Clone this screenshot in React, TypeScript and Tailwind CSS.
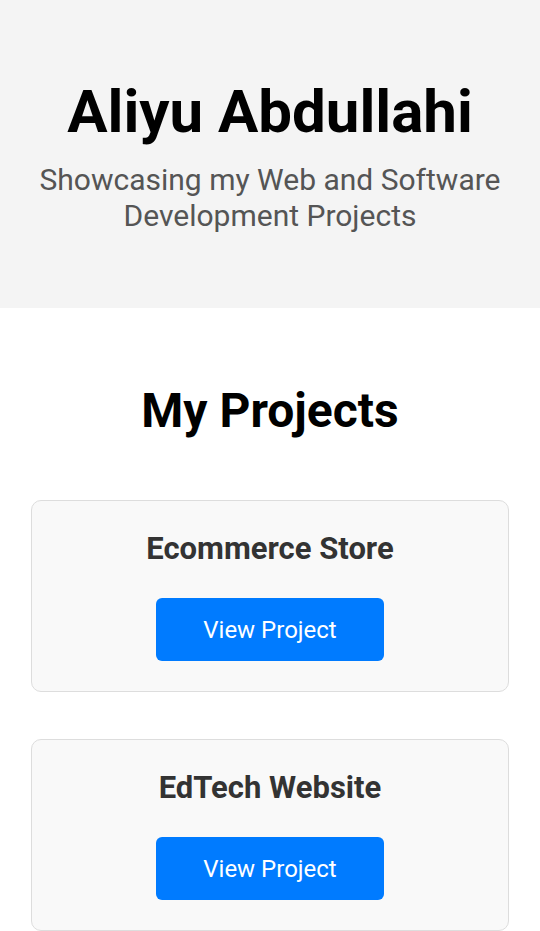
export default function App() {
  const projects = ["Ecommerce Store", "EdTech Website"];
  return (
    <div className="min-h-screen bg-white font-['Roboto',sans-serif]">
      <header className="bg-[#f4f4f4] pt-[75px] pb-[74px] text-center">
        <h1 className="text-[60px] leading-[74px] font-bold text-black">Aliyu Abdullahi</h1>
        <p className="mt-[13px] px-[20px] text-[30px] leading-[36px] text-[#555]">
          Showcasing my Web and Software Development Projects
        </p>
      </header>
      <section className="px-[31px] pt-[73px]">
        <h2 className="text-center text-[48px] leading-[60px] font-bold text-black">My Projects</h2>
        <div className="mt-[59px] flex flex-col gap-[47px]">
          {projects.map((p) => (
            <div
              key={p}
              className="rounded-[10px] border border-[#ddd] bg-[#f9f9f9] pt-[28px] pb-[30px] text-center"
            >
              <h3 className="text-[31px] leading-[40px] font-bold text-[#333]">{p}</h3>
              <button className="mt-[29px] h-[63px] w-[228px] rounded-[6px] bg-[#007bff] text-[24px] text-white">
                View Project
              </button>
            </div>
          ))}
        </div>
      </section>
    </div>
  );
}
